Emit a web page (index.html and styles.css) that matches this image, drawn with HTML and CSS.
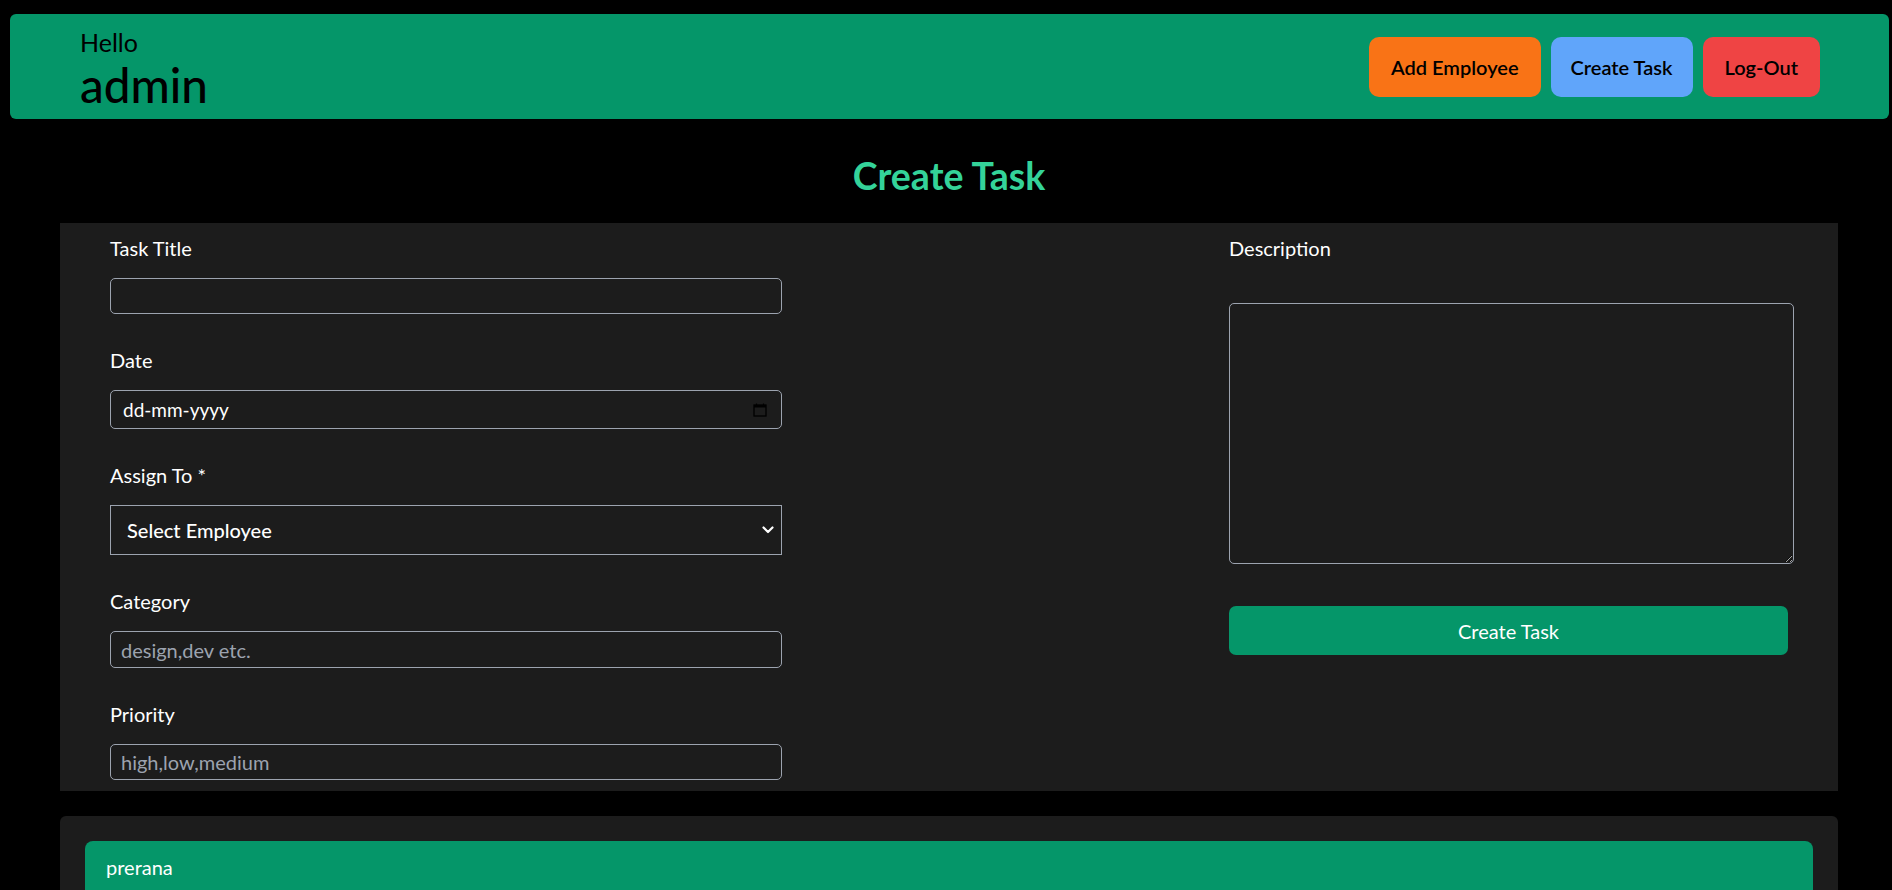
FILE: index.html
```html
<!DOCTYPE html>
<html lang="en">
<head>
<meta charset="utf-8">
<title>Admin Dashboard</title>
<link rel="stylesheet" href="styles.css">
</head>
<body>
<div class="page">
  <header class="topbar">
    <div class="greeting">
      <p class="hello">Hello</p>
      <p class="user">admin</p>
    </div>
    <nav class="actions">
      <button class="btn btn-orange">Add Employee</button>
      <button class="btn btn-blue">Create Task</button>
      <button class="btn btn-red">Log-Out</button>
    </nav>
  </header>

  <main class="content">
    <h1 class="page-title">Create Task</h1>

    <form class="task-form">
      <div class="col-left">
        <div class="field">
          <label class="label">Task Title</label>
          <input class="input input-title" type="text">
        </div>
        <div class="field">
          <label class="label">Date</label>
          <div class="input input-date">
            <span class="date-text">dd-mm-yyyy</span>
            <svg class="cal-icon" width="14" height="14" viewBox="0 0 14 14">
              <path d="M3.5 0.5v2M10.5 0.5v2" stroke="#000" stroke-width="1.2" fill="none"/>
              <rect x="1" y="2" width="12" height="11" fill="none" stroke="#000" stroke-width="1.3"/>
              <rect x="1" y="2" width="12" height="2.5" fill="#000"/>
            </svg>
          </div>
        </div>
        <div class="field">
          <label class="label">Assign To *</label>
          <div class="input input-select">
            <span class="select-text">Select Employee</span>
            <svg class="chevron" width="12" height="8" viewBox="0 0 12 8">
              <path d="M1.5 1.5l4.5 4.5 4.5-4.5" stroke="#fff" stroke-width="2.2" fill="none" stroke-linecap="round" stroke-linejoin="round"/>
            </svg>
          </div>
        </div>
        <div class="field">
          <label class="label">Category</label>
          <input class="input input-cat" type="text" placeholder="design,dev etc.">
        </div>
        <div class="field">
          <label class="label">Priority</label>
          <input class="input input-pri" type="text" placeholder="high,low,medium">
        </div>
      </div>

      <div class="col-right">
        <label class="label label-desc">Description</label>
        <textarea class="textarea"></textarea>
        <button type="button" class="submit">Create Task</button>
      </div>
    </form>

    <section class="employees">
      <div class="emp-bar">prerana</div>
    </section>
  </main>
</div>
</body>
</html>
```

FILE: styles.css
```css
* {
  box-sizing: border-box;
}

html, body {
  margin: 0;
  padding: 0;
  background: #000;
  height: 890px;
  overflow: hidden;
}

body {
  font-family: Lato, "Open Sans", sans-serif;
  color: #fff;
}

.page {
  padding: 14px 3px 0 10px;
}

.topbar {
  background: #059669;
  border-radius: 6px;
  height: 105px;
  display: flex;
  justify-content: space-between;
  align-items: center;
  padding: 0 69px 0 70px;
}

.greeting {
  align-self: flex-start;
  margin-top: 13px;
  color: #000;
}

.hello {
  margin: 0;
  font-size: 25px;
  line-height: 30px;
}

.user {
  margin: 0;
  font-size: 47.5px;
  line-height: 55px;
  font-weight: 500;
}

.actions {
  display: flex;
  gap: 10px;
}

.btn {
  height: 60px;
  padding: 0 22px;
  border: none;
  border-radius: 10px;
  font-family: inherit;
  font-size: 20px;
  font-weight: 600;
  color: #000;
}

.btn-orange { background: #f97316; }
.btn-blue { background: #60a5fa; padding: 0 20px; }
.btn-red { background: #ef4444; }

.content {
  margin: 0 51px 0 50px;
}

.page-title {
  margin: 34px 0 25px;
  font-size: 37.5px;
  line-height: 45px;
  font-weight: 700;
  text-align: center;
  color: #34d399;
}

.task-form {
  background: #1c1c1c;
  padding: 10px 50px 11px;
  display: flex;
  justify-content: space-between;
  align-items: flex-start;
}

.col-left {
  width: 672px;
}

.field + .field {
  margin-top: 31px;
}

.label {
  display: block;
  font-size: 20px;
  line-height: 30px;
  margin-bottom: 15px;
}

.input {
  display: block;
  width: 100%;
  background: transparent;
  border: 1px solid #9ca3af;
  border-radius: 5px;
  color: #fff;
  font-family: inherit;
  font-size: 20px;
  padding: 0 10px;
  outline: none;
}

.input::placeholder {
  color: #9ca3af;
}

.input-title { height: 36px; }
.input-cat { height: 37px; }
.input-pri { height: 36px; }

.input-date {
  height: 39px;
  display: flex;
  align-items: center;
  justify-content: space-between;
  padding: 0 14px 0 12px;
}

.date-text {
  font-size: 19px;
}

.input-select {
  height: 50px;
  border-radius: 0;
  display: flex;
  align-items: center;
  justify-content: space-between;
  padding: 0 7px 0 16px;
}

.select-text {
  font-size: 20px;
  font-weight: 500;
}

.col-right {
  width: 559px;
}

.label-desc {
  margin-bottom: 40px;
}

.textarea {
  display: block;
  width: 565px;
  height: 261px;
  background: transparent;
  border: 1px solid #9ca3af;
  border-radius: 5px;
  color: #fff;
  resize: both;
  outline: none;
}

.submit {
  display: block;
  width: 100%;
  height: 49px;
  margin-top: 42px;
  border: none;
  border-radius: 7px;
  background: #059669;
  color: #fff;
  font-family: inherit;
  font-size: 20px;
}

.employees {
  margin-top: 25px;
  background: #1c1c1c;
  border-radius: 6px;
  padding: 25px 25px 20px;
}

.emp-bar {
  background: #059669;
  border-radius: 8px;
  height: 60px;
  padding: 14px 21px 0;
  font-size: 20px;
  line-height: 24px;
}
```
